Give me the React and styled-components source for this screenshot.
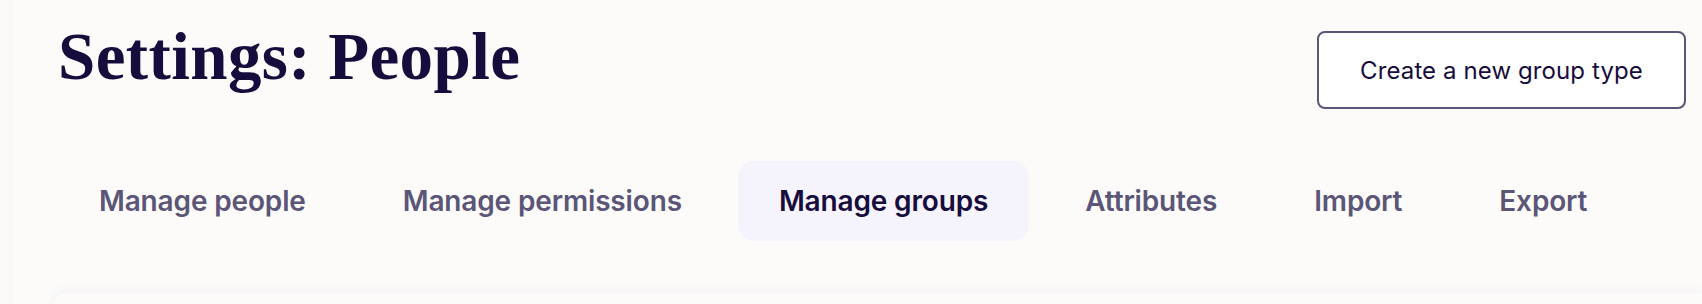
import React from "react"
import styled, { createGlobalStyle } from "styled-components"

const GlobalStyle = createGlobalStyle`
  body {
    margin: 0;
    background: #fcfbfa;
    font-family: "Inter", "Liberation Sans", sans-serif;
  }
`

const Page = styled.div`
  min-height: 304px;
  overflow: hidden;
  border-left: 14px solid #faf9f8;
`

const Header = styled.div`
  display: flex;
  justify-content: space-between;
  align-items: flex-start;
  padding: 22px 16px 0 44px;
`

const Title = styled.h1`
  margin: 1px 0 0;
  font-family: "Liberation Serif", serif;
  font-size: 67px;
  line-height: 1;
  font-weight: 700;
  letter-spacing: 0.4px;
  color: #170d3d;
`

const Button = styled.button`
  margin-top: 9px;
  width: 369px;
  height: 78px;
  border: 2px solid #5b5677;
  border-radius: 8px;
  background: #ffffff;
  color: #170d3d;
  font-family: "Inter", sans-serif;
  font-size: 24px;
  font-weight: 400;
  letter-spacing: 0.1px;
  cursor: pointer;
`

const Tabs = styled.div`
  display: flex;
  gap: 15px;
  margin-top: 52px;
  padding-left: 44px;
`

const Tab = styled.div`
  display: flex;
  align-items: center;
  height: 80px;
  padding: 0 41px;
  border-radius: 16px;
  font-size: 28px;
  font-weight: 600;
  letter-spacing: -0.15px;
  color: ${(p) => (p.$active ? "#170d3d" : "#5b5677")};
  background: ${(p) => (p.$active ? "#f5f3fc" : "transparent")};
`

const Card = styled.div`
  margin: 52px 0 0 40px;
  height: 40px;
  background: #fcfbfa;
  box-shadow: 0 -2px 12px rgba(80, 60, 120, 0.05);
  border-radius: 12px 0 0 0;
`

const tabs = ["Manage people", "Manage permissions", "Manage groups", "Attributes", "Import", "Export"]

const App = () => {
  return (
    <Page>
      <GlobalStyle />
      <Header>
        <Title>Settings: People</Title>
        <Button>Create a new group type</Button>
      </Header>
      <Tabs>
        {tabs.map((t) => (
          <Tab key={t} $active={t === "Manage groups"}>{t}</Tab>
        ))}
      </Tabs>
      <Card />
    </Page>
  )
}

export default App
